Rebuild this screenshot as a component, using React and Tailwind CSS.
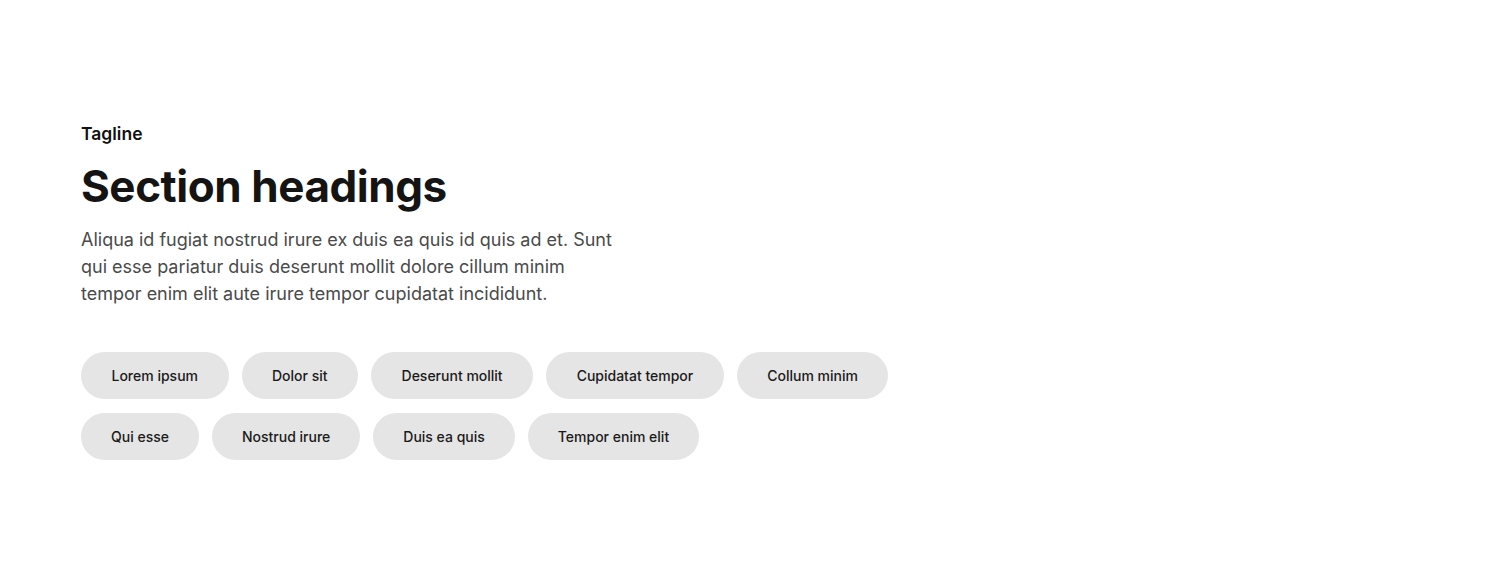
export default function App() {
  const row1 = ["Lorem ipsum", "Dolor sit", "Deserunt mollit", "Cupidatat tempor", "Collum minim"];
  const row2 = ["Qui esse", "Nostrud irure", "Duis ea quis", "Tempor enim elit"];
  return (
    <div className="min-h-[581px] bg-white px-[81px] pt-[121px] font-['Inter',sans-serif]">
      <div className="max-w-[820px]">
        <p className="text-[17.5px] font-semibold leading-[26px] text-[#111111]">Tagline</p>
        <h2 className="mt-[13px] text-[44px] font-bold leading-[52px] tracking-[-0.01em] text-[#141414]">Section headings</h2>
        <p className="mt-[14px] max-w-[540px] text-lg leading-[27px] text-[#4a4a4a]">
          Aliqua id fugiat nostrud irure ex duis ea quis id quis ad et. Sunt qui esse pariatur duis deserunt mollit dolore cillum minim tempor enim elit aute irure tempor cupidatat incididunt.
        </p>
        <div className="mt-[45px] flex flex-col gap-[14px]">
          <div className="flex gap-[13px]">
            {row1.map((t) => (
              <span key={t} className="rounded-full bg-[#e5e5e5] px-[30.5px] py-[13px] text-sm font-medium leading-[21px] text-[#1a1a1a]">{t}</span>
            ))}
          </div>
          <div className="flex gap-[13px]">
            {row2.map((t) => (
              <span key={t} className="rounded-full bg-[#e5e5e5] px-[30px] py-[13px] text-sm font-medium leading-[21px] text-[#1a1a1a]">{t}</span>
            ))}
          </div>
        </div>
      </div>
    </div>
  );
}
